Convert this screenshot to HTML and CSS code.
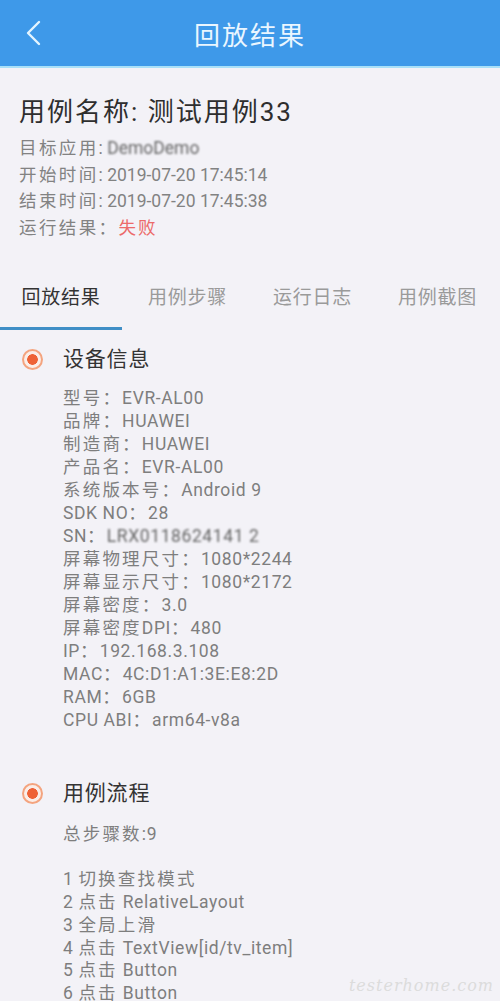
FILE: index.html
```html
<!DOCTYPE html>
<html lang="zh-CN">

<head>
    <meta charset="UTF-8">
    <meta name="viewport" content="width=device-width, initial-scale=1.0">
    <title>回放结果</title>
    <link rel="stylesheet" href="styles.css">
</head>

<body>
    <header class="barra">
        <span class="volver">
            <svg width="20" height="26" viewBox="0 0 20 26">
                <polyline points="15,2 4,13 15,24" fill="none" stroke="#e4f5ff" stroke-width="2.4" stroke-linecap="round" stroke-linejoin="round" />
            </svg>
        </span>
        <h1>回放结果</h1>
    </header>

    <section class="resumen">
        <h2>用例名称: 测试用例33</h2>
        <p><span class="etq">目标应用</span>: <span class="borroso">DemoDemo</span></p>
        <p><span class="etq">开始时间</span>: 2019-07-20 17:45:14</p>
        <p><span class="etq">结束时间</span>: 2019-07-20 17:45:38</p>
        <p><span class="etq">运行结果：</span><span class="fallo">失败</span></p>
    </section>

    <nav class="pestanas">
        <span class="activa">回放结果</span>
        <span>用例步骤</span>
        <span>运行日志</span>
        <span>用例截图</span>
    </nav>

    <section class="bloque">
        <div class="titulo"><i class="punto"></i>设备信息</div>
        <ul class="datos">
            <li><span class="etq">型号：</span>EVR-AL00</li>
            <li><span class="etq">品牌：</span>HUAWEI</li>
            <li><span class="etq">制造商：</span>HUAWEI</li>
            <li><span class="etq">产品名：</span>EVR-AL00</li>
            <li><span class="etq">系统版本号：</span>Android 9</li>
            <li>SDK NO<span class="etq">：</span>28</li>
            <li>SN<span class="etq">：</span><span class="borroso">LRX0118624141 2</span></li>
            <li><span class="etq">屏幕物理尺寸：</span>1080*2244</li>
            <li><span class="etq">屏幕显示尺寸：</span>1080*2172</li>
            <li><span class="etq">屏幕密度：</span>3.0</li>
            <li><span class="etq">屏幕密度</span>DPI<span class="etq">：</span>480</li>
            <li>IP<span class="etq">：</span>192.168.3.108</li>
            <li>MAC<span class="etq">：</span>4C:D1:A1:3E:E8:2D</li>
            <li>RAM<span class="etq">：</span>6GB</li>
            <li>CPU ABI<span class="etq">：</span>arm64-v8a</li>
        </ul>
    </section>

    <section class="bloque flujo">
        <div class="titulo"><i class="punto"></i>用例流程</div>
        <ul class="datos pasos">
            <li><span class="etq">总步骤数</span>:9</li>
            <li>&nbsp;</li>
            <li>1 <span class="etq">切换查找模式</span></li>
            <li>2 <span class="etq">点击</span> RelativeLayout</li>
            <li>3 <span class="etq">全局上滑</span></li>
            <li>4 <span class="etq">点击</span> TextView[id/tv_item]</li>
            <li>5 <span class="etq">点击</span> Button</li>
            <li>6 <span class="etq">点击</span> Button</li>
        </ul>
    </section>

    <div class="marca">testerhome.com</div>
</body>

</html>
```

FILE: styles.css
```css
* {
    box-sizing: border-box;
    margin: 0;
    padding: 0;
}

body {
    width: 500px;
    height: 1001px;
    overflow: hidden;
    position: relative;
    background-color: #f3f2f7;
    font-family: Roboto, "Noto Sans CJK SC", sans-serif;
    color: #7a7a7a;
}

.barra {
    height: 68px;
    background-color: #3e99e9;
    border-bottom: 2px solid #a9e0f8;
    display: flex;
    align-items: center;
    justify-content: center;
    position: relative;
}

.barra h1 {
    font-size: 26px;
    font-weight: 400;
    color: #eaf6ff;
}

.volver {
    position: absolute;
    left: 24px;
    top: 20px;
    display: flex;
}

.resumen {
    padding: 27px 0 0 19px;
}

.resumen h2 {
    font-size: 26px;
    line-height: 34px;
    font-weight: 400;
    color: #2e2e2e;
    margin-bottom: 6px;
}

.resumen h2,
.barra h1 {
    letter-spacing: 2px;
}

.resumen p {
    font-size: 17.5px;
    line-height: 26.5px;
    color: #828282;
}

.resumen .etq {
    letter-spacing: 2.4px;
}

.fallo {
    color: #ec6a6a;
    letter-spacing: 2px;
}

.borroso {
    filter: blur(1.3px);
    color: #666;
}

.pestanas {
    display: grid;
    grid-template-columns: repeat(4, 1fr);
    margin-top: 31px;
}

.pestanas span {
    text-align: center;
    font-size: 19px;
    line-height: 26px;
    letter-spacing: 0.8px;
    padding: 13px 0 16px;
    color: #9a9a9a;
    border-bottom: 3px solid transparent;
}

.pestanas .activa {
    color: #333;
    margin-right: 3px;
    border-bottom-color: #3f8ec6;
}

.bloque {
    padding-top: 14px;
}

.flujo {
    padding-top: 46px;
}

.titulo {
    display: flex;
    align-items: center;
    gap: 20px;
    padding-left: 22px;
    font-size: 21px;
    line-height: 30px;
    letter-spacing: 0.8px;
    color: #333;
}

.punto {
    width: 21px;
    height: 21px;
    border-radius: 50%;
    border: 2px solid #f4a47f;
    background: radial-gradient(circle, #ee6236 0 5px, #fbeee8 5.6px);
}

.datos {
    list-style: none;
    padding-left: 63px;
    margin-top: 13px;
    font-size: 17.5px;
    line-height: 23px;
    letter-spacing: 0.6px;
    color: #7e7e7e;
}

.datos .etq {
    letter-spacing: 2.2px;
}

.pasos {
    margin-top: 15px;
    line-height: 22.7px;
}

.marca {
    position: absolute;
    right: 6px;
    bottom: 6px;
    font-family: "DejaVu Serif", serif;
    font-style: italic;
    font-size: 16px;
    color: #dcdcdc;
    letter-spacing: 1px;
}
```
